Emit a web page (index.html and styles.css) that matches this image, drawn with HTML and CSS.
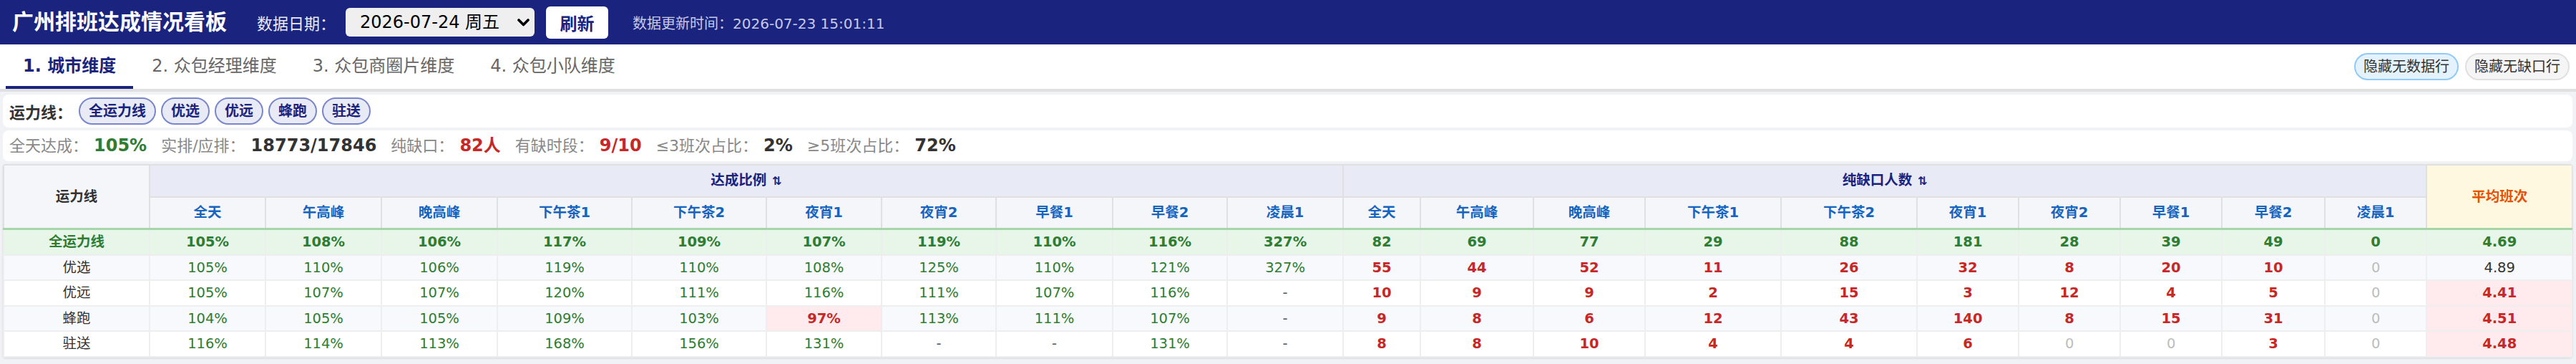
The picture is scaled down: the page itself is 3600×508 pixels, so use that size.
FILE: index.html
```html
<!DOCTYPE html>
<html lang="zh-CN">
<head>
<meta charset="utf-8">
<title>广州排班达成情况看板</title>
<link rel="stylesheet" href="styles.css">
</head>
<body>
<header class="topbar">
  <h1 class="title">广州排班达成情况看板</h1>
  <span class="date-label">数据日期：</span>
  <div class="select-wrap">
    <select class="date-select"><option>2026-07-24 周五</option></select>
    <svg class="chev" width="17" height="11" viewBox="0 0 17 11"><polyline points="2,2 8.5,8.5 15,2" fill="none" stroke="#000" stroke-width="3.6" stroke-linecap="round" stroke-linejoin="round"/></svg>
  </div>
  <button class="refresh">刷新</button>
  <span class="updated">数据更新时间：2026-07-23 15:01:11</span>
</header>

<nav class="tabs">
  <div class="tab active">1. 城市维度</div>
  <div class="tab">2. 众包经理维度</div>
  <div class="tab">3. 众包商圈片维度</div>
  <div class="tab">4. 众包小队维度</div>
  <div class="tools">
    <button class="tbtn on">隐藏无数据行</button>
    <button class="tbtn">隐藏无缺口行</button>
  </div>
</nav>

<main class="main">
  <section class="card filter">
    <span class="filter-label">运力线：</span>
    <span class="pill">全运力线</span>
    <span class="pill">优选</span>
    <span class="pill">优远</span>
    <span class="pill">蜂跑</span>
    <span class="pill">驻送</span>
  </section>

  <section class="card stats">
    <span class="st-label">全天达成：</span><span class="st-val green">105%</span>
    <span class="st-label">实排/应排：</span><span class="st-val">18773/17846</span>
    <span class="st-label">纯缺口：</span><span class="st-val red">82人</span>
    <span class="st-label">有缺时段：</span><span class="st-val red">9/10</span>
    <span class="st-label">≤3班次占比：</span><span class="st-val">2%</span>
    <span class="st-label">≥5班次占比：</span><span class="st-val">72%</span>
  </section>

  <section class="tbl-wrap">
    <table class="grid">
      <colgroup>
        <col class="cw204">
        <col class="cw162"><col class="cw162"><col class="cw162"><col class="cw188"><col class="cw188">
        <col class="cw161"><col class="cw160"><col class="cw163"><col class="cw160"><col class="cw162">
        <col class="cw108"><col class="cw158"><col class="cw156"><col class="cw190"><col class="cw190">
        <col class="cw142"><col class="cw142"><col class="cw142"><col class="cw144"><col class="cw142">
        <col class="cw204">
      </colgroup>
      <thead>
        <tr>
          <th class="corner" rowspan="2">运力线</th>
          <th class="group" colspan="10">达成比例<span class="sort">⇅</span></th>
          <th class="group" colspan="10">纯缺口人数<span class="sort">⇅</span></th>
          <th class="avg-head" rowspan="2">平均班次</th>
        </tr>
        <tr class="sub">
          <th>全天</th><th>午高峰</th><th>晚高峰</th><th>下午茶1</th><th>下午茶2</th><th>夜宵1</th><th>夜宵2</th><th>早餐1</th><th>早餐2</th><th>凌晨1</th>
          <th>全天</th><th>午高峰</th><th>晚高峰</th><th>下午茶1</th><th>下午茶2</th><th>夜宵1</th><th>夜宵2</th><th>早餐1</th><th>早餐2</th><th>凌晨1</th>
        </tr>
      </thead>
      <tbody>
        <tr class="total">
          <td>全运力线</td>
          <td>105%</td><td>108%</td><td>106%</td><td>117%</td><td>109%</td><td>107%</td><td>119%</td><td>110%</td><td>116%</td><td>327%</td>
          <td>82</td><td>69</td><td>77</td><td>29</td><td>88</td><td>181</td><td>28</td><td>39</td><td>49</td><td>0</td>
          <td>4.69</td>
        </tr>
        <tr>
          <td class="name">优选</td>
          <td class="rate">105%</td><td class="rate">110%</td><td class="rate">106%</td><td class="rate">119%</td><td class="rate">110%</td><td class="rate">108%</td><td class="rate">125%</td><td class="rate">110%</td><td class="rate">121%</td><td class="rate">327%</td>
          <td class="gap">55</td><td class="gap">44</td><td class="gap">52</td><td class="gap">11</td><td class="gap">26</td><td class="gap">32</td><td class="gap">8</td><td class="gap">20</td><td class="gap">10</td><td class="zero">0</td>
          <td class="avg">4.89</td>
        </tr>
        <tr>
          <td class="name">优远</td>
          <td class="rate">105%</td><td class="rate">107%</td><td class="rate">107%</td><td class="rate">120%</td><td class="rate">111%</td><td class="rate">116%</td><td class="rate">111%</td><td class="rate">107%</td><td class="rate">116%</td><td class="dash">-</td>
          <td class="gap">10</td><td class="gap">9</td><td class="gap">9</td><td class="gap">2</td><td class="gap">15</td><td class="gap">3</td><td class="gap">12</td><td class="gap">4</td><td class="gap">5</td><td class="zero">0</td>
          <td class="avg bad">4.41</td>
        </tr>
        <tr>
          <td class="name">蜂跑</td>
          <td class="rate">104%</td><td class="rate">105%</td><td class="rate">105%</td><td class="rate">109%</td><td class="rate">103%</td><td class="rate low">97%</td><td class="rate">113%</td><td class="rate">111%</td><td class="rate">107%</td><td class="dash">-</td>
          <td class="gap">9</td><td class="gap">8</td><td class="gap">6</td><td class="gap">12</td><td class="gap">43</td><td class="gap">140</td><td class="gap">8</td><td class="gap">15</td><td class="gap">31</td><td class="zero">0</td>
          <td class="avg bad">4.51</td>
        </tr>
        <tr>
          <td class="name">驻送</td>
          <td class="rate">116%</td><td class="rate">114%</td><td class="rate">113%</td><td class="rate">168%</td><td class="rate">156%</td><td class="rate">131%</td><td class="dash">-</td><td class="dash">-</td><td class="rate">131%</td><td class="dash">-</td>
          <td class="gap">8</td><td class="gap">8</td><td class="gap">10</td><td class="gap">4</td><td class="gap">4</td><td class="gap">6</td><td class="zero">0</td><td class="zero">0</td><td class="gap">3</td><td class="zero">0</td>
          <td class="avg bad">4.48</td>
        </tr>
      </tbody>
    </table>
  </section>
</main>
</body>
</html>
```

FILE: styles.css
```css
* { box-sizing: border-box; }

body {
  margin: 0;
  font-family: "DejaVu Sans", "Noto Sans CJK SC", sans-serif;
  background: #f0f2f5;
  color: #333;
}

/* ---------- top bar ---------- */
.topbar {
  display: flex;
  align-items: center;
  height: 62px;
  padding-left: 17px;
  background: #1a237e;
  color: #fff;
}
.title {
  margin: 0 42px 0 0;
  font-size: 30px;
  font-weight: bold;
  line-height: 1;
}
.date-label {
  font-size: 22px;
  color: #e8eaf6;
  margin-right: 14px;
}
.select-wrap {
  position: relative;
  display: flex;
}
.date-select {
  appearance: none;
  -webkit-appearance: none;
  width: 264px;
  height: 40px;
  padding: 0 0 0 20px;
  border: none;
  border-radius: 6px;
  background: #efefef;
  color: #000;
  font-family: inherit;
  font-size: 24px;
}
.chev {
  position: absolute;
  right: 7px;
  top: 15px;
  pointer-events: none;
}
.refresh {
  margin-left: 16px;
  width: 87px;
  height: 45px;
  border: none;
  border-radius: 6px;
  background: #fff;
  color: #1a237e;
  font-family: inherit;
  font-size: 24px;
  font-weight: bold;
}
.updated {
  margin-left: 34px;
  font-size: 20px;
  color: #c5cae9;
}

/* ---------- tabs ---------- */
.tabs {
  display: flex;
  align-items: center;
  height: 66px;
  padding: 0 9px 0 8px;
  background: #fff;
  border-bottom: 4px solid #e0e0e0;
}
.tab {
  height: 62px;
  padding: 0 24px;
  margin-right: 2px;
  border-bottom: 4px solid transparent;
  line-height: 60px;
  font-size: 24px;
  color: #666;
}
.tab.active {
  color: #1a237e;
  font-weight: bold;
  border-bottom-color: #1a237e;
}
.tools {
  margin-left: auto;
  display: flex;
  gap: 9px;
}
.tbtn {
  height: 38px;
  padding: 0 11px;
  border: 2px solid #e0e0e0;
  border-radius: 19px;
  background: #f5f5f5;
  color: #333;
  font-family: inherit;
  font-size: 20px;
  line-height: 34px;
}
.tbtn.on {
  background: #e3f2fd;
  border-color: #90caf9;
}

/* ---------- main ---------- */
.main {
  display: flex;
  flex-direction: column;
  gap: 4px;
  padding: 4px 5px 4px 4px;
}
.card {
  background: #fff;
  border-radius: 8px;
}
.filter {
  display: flex;
  align-items: center;
  gap: 7px;
  padding: 4px 9px;
}
.filter-label {
  font-size: 22px;
  font-weight: bold;
  color: #333;
  margin-right: 2px;
}
.pill {
  height: 38px;
  padding: 0 12px;
  border: 2px solid #7986cb;
  border-radius: 19px;
  background: #e8eaf6;
  color: #1a237e;
  font-size: 20px;
  font-weight: bold;
  line-height: 34px;
}
.stats {
  display: flex;
  align-items: baseline;
  padding: 4px 9px;
  line-height: 34px;
}
.st-label {
  font-size: 22px;
  color: #888;
}
.st-val {
  margin: 0 20px 0 8px;
  font-size: 24px;
  font-weight: bold;
  color: #333;
}
.green { color: #2e7d32; }
.red { color: #c62828; }

/* ---------- table ---------- */
.tbl-wrap {
  background: #fff;
  border-radius: 4px;
  overflow: hidden;
  box-shadow: 0 1px 3px rgba(0, 0, 0, 0.12);
}
.grid {
  width: 100%;
  border-collapse: collapse;
  table-layout: fixed;
  font-size: 19.5px;
  text-align: center;
}
.cw204 { width: 204px; }
.cw190 { width: 190px; }
.cw188 { width: 188px; }
.cw163 { width: 163px; }
.cw162 { width: 162px; }
.cw161 { width: 161px; }
.cw160 { width: 160px; }
.cw158 { width: 158px; }
.cw156 { width: 156px; }
.cw144 { width: 144px; }
.cw142 { width: 142px; }
.cw108 { width: 108px; }

.grid th {
  padding: 9px 2px;
  line-height: 24px;
  border: 2px solid #e0e0e0;
  font-weight: bold;
  white-space: nowrap;
}
.grid td {
  padding: 5px 2px;
  line-height: 23.5px;
  border: 2px solid #eeeeee;
  white-space: nowrap;
}
.corner {
  background: #f5f6fa;
  color: #333;
  border-bottom: 3px solid #a5d6a7 !important;
}
.group {
  background: #e8eaf6;
  color: #1a237e;
}
.sort {
  margin-left: 8px;
  font-size: 16px;
}
.avg-head {
  background: #fff8e1;
  color: #e65100;
  border-bottom: 3px solid #a5d6a7 !important;
}
.sub th {
  background: #f5f6fa;
  color: #1565c0;
  border-bottom: 3px solid #a5d6a7;
}

tbody tr:nth-child(even) td { background: #f8f9fc; }
tbody tr.total td {
  background: #e8f5e9;
  color: #2e7d32;
  font-weight: bold;
}
.name { color: #333; }
.rate { color: #2e7d32; }
.dash { color: #555; }
.gap { color: #c62828; font-weight: bold; }
.zero { color: #bdbdbd; }
.avg { color: #333; }
tbody tr td.low,
tbody tr td.bad {
  background: #ffebee;
  color: #c62828;
  font-weight: bold;
}
```
